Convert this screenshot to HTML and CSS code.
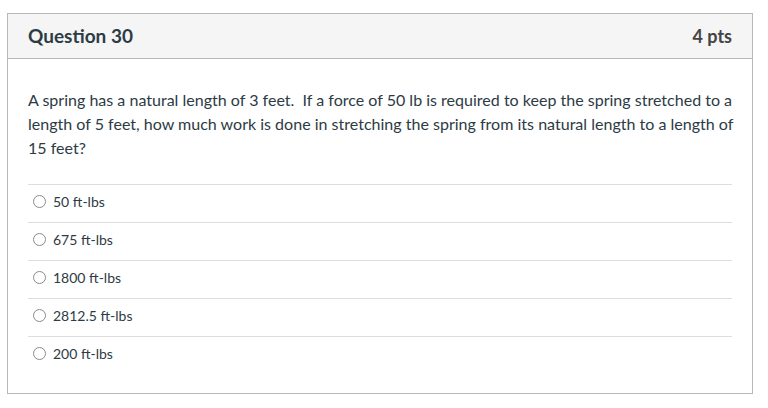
FILE: index.html
```html
<!DOCTYPE html>
<html>
<head>
<meta charset="utf-8">
<link rel="stylesheet" href="styles.css">
</head>
<body>
<div class="card">
  <div class="header">
    <span class="title">Question 30</span>
    <span class="pts">4 pts</span>
  </div>
  <div class="body">
    <p class="question">A spring has a natural length of 3 feet.&nbsp; If a force of 50 lb is required to keep the spring stretched to a length of 5 feet, how much work is done in stretching the spring from its natural length to a length of 15 feet?</p>
    <div class="answers">
      <label class="answer"><span class="radio"></span><span>50 ft-lbs</span></label>
      <label class="answer"><span class="radio"></span><span>675 ft-lbs</span></label>
      <label class="answer"><span class="radio"></span><span>1800 ft-lbs</span></label>
      <label class="answer"><span class="radio"></span><span>2812.5 ft-lbs</span></label>
      <label class="answer"><span class="radio"></span><span>200 ft-lbs</span></label>
    </div>
  </div>
</div>
</body>
</html>
```
FILE: styles.css
```css
html, body {
  margin: 0;
  padding: 0;
  background: #ffffff;
}
body {
  font-family: Lato, "Liberation Sans", sans-serif;
  color: #2d3b45;
  padding: 13px 15px 0 7px;
}
.card {
  border: 1px solid #b8b8b8;
  width: 744px;
  height: 379px;
}
.header {
  background: #f5f5f5;
  border-bottom: 1px solid #b8b8b8;
  height: 44px;
  display: flex;
  align-items: center;
  justify-content: space-between;
  padding: 0 20px 0 20px;
}
.title {
  font-weight: 700;
  font-size: 19px;
  margin-top: -2px;
}
.pts {
  font-weight: 700;
  font-size: 18px;
  color: #444;
  margin-top: -1px;
}
.body {
  padding: 29px 19px 0 20px;
}
.question {
  margin: 0 -4px 0 0;
  font-size: 16.05px;
  line-height: 24px;
}
.answers {
  margin-top: 24px;
  margin-right: 1px;
}
.answer {
  display: flex;
  align-items: center;
  gap: 7px;
  height: 33px;
  padding-bottom: 4px;
  border-top: 1px solid #dddddd;
  padding-left: 5px;
  font-size: 14px;
}
.radio {
  width: 11px;
  height: 11px;
  border: 1px solid #8a8a8a;
  border-radius: 50%;
  background: #fff;
}
```
